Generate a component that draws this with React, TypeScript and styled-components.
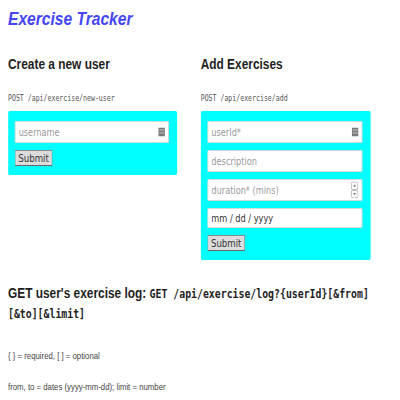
import React from "react";
import styled, { createGlobalStyle } from "styled-components";

/* The reference is a page laid out at ~488px and shown 0.82× narrower;
   the page is built at its own width and squeezed horizontally. */
const SQUEEZE = 0.82;

const Global = createGlobalStyle`
  html, body { margin: 0; padding: 0; background: #fff; overflow-x: hidden; }
  body { font-family: "Liberation Sans", Arial, sans-serif; color: #222; }
`;

const Page = styled.div`
  box-sizing: border-box;
  width: 488px;
  padding: 8px 9.75px;
  transform: scaleX(${SQUEEZE});
  transform-origin: 0 0;
`;

const Title = styled.h1`
  margin: 0;
  font-size: 19px;
  line-height: 21px;
  font-style: italic;
  font-weight: bold;
  color: #4545f2;
`;

const Columns = styled.div`
  display: grid;
  grid-template-columns: 206px 207px;
  column-gap: 29px;
  margin-top: 27px;
  align-items: start;
`;

const Section = styled.section`
  display: flex;
  flex-direction: column;
`;

const Heading = styled.h2`
  margin: 0;
  font-size: 14.5px;
  line-height: 17px;
  font-weight: bold;
  color: #1e1e1e;
`;

const Endpoint = styled.code`
  margin-top: 21px;
  font-family: "DejaVu Sans Mono", "Liberation Mono", monospace;
  font-size: 8px;
  line-height: 10px;
  color: #555;
`;

const FormBox = styled.form`
  margin-top: 7px;
  background: #00ffff;
  border-radius: 2px;
  padding: 10px 9.75px 9px 8.5px;
  display: flex;
  flex-direction: column;
  align-items: flex-start;
  gap: 7px;
`;

const Field = styled.div`
  position: relative;
  align-self: stretch;
  display: flex;
`;

const Input = styled.input<{ $h?: number; $dark?: boolean }>`
  flex: 1;
  box-sizing: border-box;
  height: ${(p) => p.$h ?? 22}px;
  margin: 0;
  padding: 0 3.5px;
  border: 1px solid #d8d8d8;
  border-radius: 1px;
  background: #fff;
  font-family: "DejaVu Sans", sans-serif;
  font-size: 10px;
  color: #333;
  outline: none;
  &::placeholder {
    color: ${(p) => (p.$dark ? "#333" : "#9a9a9a")};
  }
`;

const FieldIcon = styled.span`
  position: absolute;
  right: 5px;
  top: 50%;
  transform: translateY(-50%);
  display: flex;
`;

const SubmitButton = styled.button`
  box-sizing: border-box;
  height: 16px;
  margin: 0;
  padding: 0 3px;
  border: 1px solid #8a8a8a;
  border-right-color: #666;
  border-bottom-color: #666;
  border-radius: 1px;
  background: #dcdcdc;
  font-family: "DejaVu Sans", sans-serif;
  font-size: 10.5px;
  line-height: 14px;
  color: #333;
`;

const LogHeading = styled.h2`
  margin: 24px 0 0;
  font-size: 14.5px;
  line-height: 19px;
  font-weight: bold;
  color: #1e1e1e;
`;

const LogPath = styled.code`
  font-family: "DejaVu Sans Mono", "Liberation Mono", monospace;
  font-size: 12px;
  font-weight: bold;
`;

const Note = styled.p`
  margin: 26px 0 0;
  font-size: 9.5px;
  line-height: 11px;
  color: #444;
`;

const NoteLast = styled(Note)`
  margin-top: 20px;
`;

const CardIcon = () => (
  <svg width="8.5" height="9" viewBox="0 0 8.5 9">
    <rect x="0" y="0" width="8.5" height="9" fill="#7a7a7a" />
    <rect x="1.2" y="2" width="6" height="1" fill="#c8c8c8" />
    <rect x="1.2" y="5" width="6" height="1" fill="#c8c8c8" />
  </svg>
);

const SpinIcon = () => (
  <svg width="9" height="17" viewBox="0 0 9 17">
    <rect x="0.5" y="0.5" width="8" height="7.5" rx="1.5" fill="#fafafa" stroke="#b5b5b5" />
    <rect x="0.5" y="9" width="8" height="7.5" rx="1.5" fill="#fafafa" stroke="#b5b5b5" />
    <path d="M2.8 5 L4.5 3 L6.2 5 Z" fill="#666" />
    <path d="M2.8 11.5 L4.5 13.5 L6.2 11.5 Z" fill="#666" />
  </svg>
);

export default function App() {
  return (
    <>
      <Global />
      <Page>
        <Title>Exercise Tracker</Title>
        <Columns>
          <Section>
            <Heading>Create a new user</Heading>
            <Endpoint>POST /api/exercise/new-user</Endpoint>
            <FormBox onSubmit={(e) => e.preventDefault()}>
              <Field>
                <Input type="text" placeholder="username" />
                <FieldIcon>
                  <CardIcon />
                </FieldIcon>
              </Field>
              <SubmitButton type="submit">Submit</SubmitButton>
            </FormBox>
          </Section>
          <Section>
            <Heading>Add Exercises</Heading>
            <Endpoint>POST /api/exercise/add</Endpoint>
            <FormBox onSubmit={(e) => e.preventDefault()}>
              <Field>
                <Input type="text" placeholder="userId*" />
                <FieldIcon>
                  <CardIcon />
                </FieldIcon>
              </Field>
              <Field>
                <Input type="text" placeholder="description" />
              </Field>
              <Field>
                <Input type="text" placeholder="duration* (mins)" />
                <FieldIcon>
                  <SpinIcon />
                </FieldIcon>
              </Field>
              <Field>
                <Input type="text" placeholder="mm / dd / yyyy" $h={20} $dark />
              </Field>
              <SubmitButton type="submit">Submit</SubmitButton>
            </FormBox>
          </Section>
        </Columns>
        <LogHeading>
          GET user's exercise log:{" "}
          <LogPath>GET /api/exercise/log?{"{userId}"}[&amp;from]</LogPath>
          <LogPath>[&amp;to][&amp;limit]</LogPath>
        </LogHeading>
        <Note>{"{ } = required, [ ] = optional"}</Note>
        <NoteLast>from, to = dates (yyyy-mm-dd); limit = number</NoteLast>
      </Page>
    </>
  );
}
